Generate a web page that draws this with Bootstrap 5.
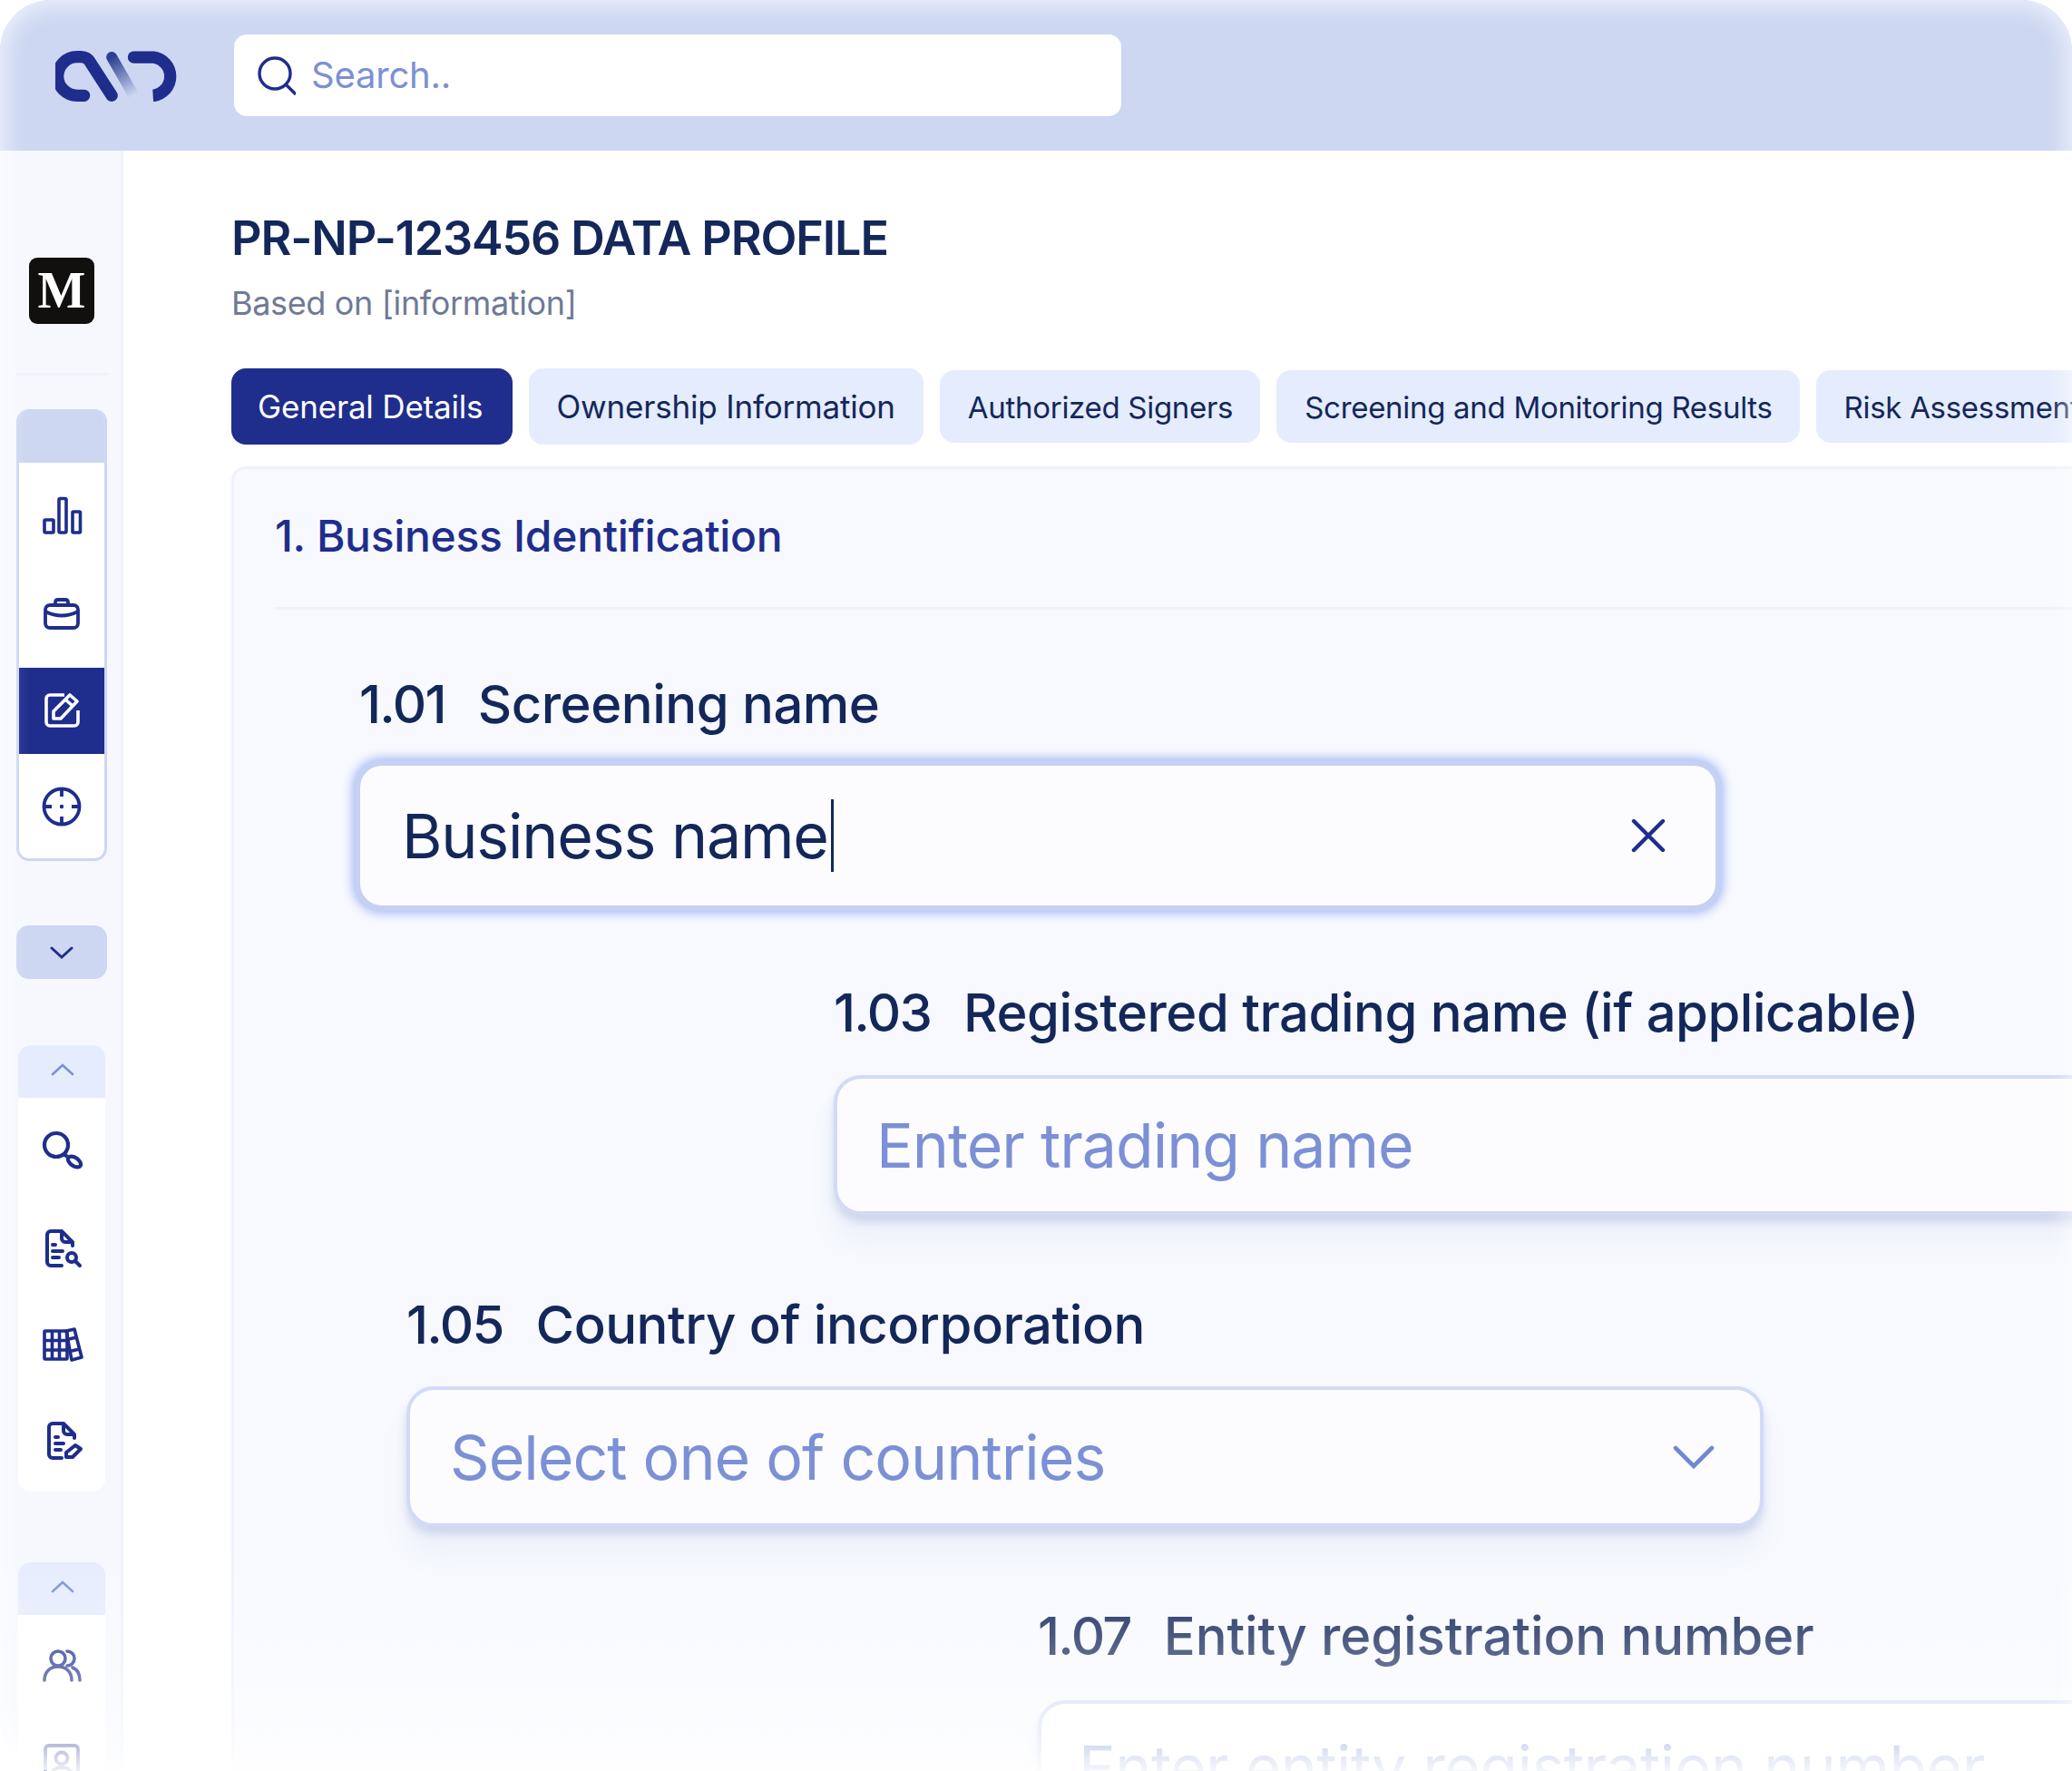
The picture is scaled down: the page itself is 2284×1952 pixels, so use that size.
<!DOCTYPE html>
<html lang="en">
<head>
<meta charset="utf-8">
<title>Data profile</title>
<link href="https://cdn.jsdelivr.net/npm/bootstrap@5.3.0/dist/css/bootstrap.min.css" rel="stylesheet">
<style>
html,body{margin:0;background:#fff}
body{font-family:Inter,"Noto Sans",sans-serif;color:#14275a;width:2284px;height:1952px;overflow:hidden}
.appwin{width:2284px;height:1952px;border-radius:56px;overflow:hidden;position:relative;background:#fff}
.appwin::after{content:"";position:absolute;inset:0;border-radius:56px;pointer-events:none;
 background:linear-gradient(180deg,rgba(255,255,255,0) 1700px,rgba(255,255,255,.22) 1800px,rgba(255,255,255,.55) 1900px,rgba(255,255,255,.85) 1952px);
 box-shadow:inset 0 0 26px 6px rgba(255,255,255,.65)}
.topbar{height:166px;background:#cdd7f2;padding:38px 0 0 61px}
.brand{width:136px;height:56px;margin:18px 61px 0 0}
.searchbox{width:978px;height:90px;background:#fff;border-radius:14px;padding-left:24px;gap:17px}
.searchbox span{font-size:40px;color:#7c90d6;letter-spacing:-.2px}
.workarea{height:1786px}
.sidenav{width:136px;flex:none;background:#f6f8fe;border-right:3px solid #edf1fc;padding:118px 0 0 18px}
.medium{width:72px;height:73px;margin-left:14px;background:#11100e;border-radius:9px;color:#fff;font:700 56px/73px "Liberation Serif",serif;text-align:center}
.sidesep{width:101px;height:3px;background:#edf1fc;margin:54px 0 37px}
.grp{width:100px;border-radius:14px;overflow:hidden;background:#fff}
.grp-main{border:3px solid #cdd7f2;border-top:0;height:498px;padding-bottom:11px}
.grp-head{height:59px;background:#cdd7f2;margin:0 -3px 12px}
.navcell{height:95px;margin-bottom:12px}
.navcell:last-child{margin-bottom:0}
.navcell.on{background:#1f2d8c}
.ico-up{margin-top:-4px}
.ico-dn{margin-top:3px}
.dropbtn{width:100px;height:59px;background:#cdd7f2;border-radius:14px;margin:71px 0 73px}
.grp-soft{width:96px;margin-left:2px;height:492px}
.softhead{height:58px;background:#e5ecfd;margin-bottom:5px;padding:0 0 5px 2px}
.softcell{height:106px}
.grp-gap{margin-top:78px;height:300px}
.mainarea{min-width:0;padding:67px 0 0 119px}
.pagetitle{font-size:52px;line-height:60px;font-weight:600;letter-spacing:-1.1px;color:#14275a;margin:0}
.pagesub{font-size:36px;line-height:44px;letter-spacing:-.35px;color:#6f7a96;margin:19px 0 50px}
.tabrow{gap:18px;height:84px;white-space:nowrap}
.tabrow .nav-link{height:80px;padding:4px 30px 0 31px;border-radius:16px;background:#e5ecfd;color:#14275a;font-size:33px;letter-spacing:-.3px;display:flex;align-items:center}
.tabrow .nav-link.active,.tabrow .nav-link.big{height:84px;padding:0 31px 0 30px;font-size:35px;letter-spacing:-.18px}
.tabrow .nav-link.active{background:#1f2d8c;color:#fff;padding:0 33px 0 29px}
.panelbox{margin-top:24px;width:2100px;height:1500px;background:#f7f9fe;border:3px solid #eef1fb;border-right:0;border-bottom:0;border-radius:16px 0 0 0}
.panelhead{margin-left:45px;padding:44px 0 48px;border-bottom:3px solid #edf1fc}
.panelhead h2{font-size:48px;line-height:60px;font-weight:500;letter-spacing:-.3px;color:#1f2d8c;margin:0}
.fieldlab{font-size:58px;line-height:70px;font-weight:500;letter-spacing:-.5px;white-space:nowrap;color:#14275a}
.fieldlab i{font-style:normal;font-weight:500;letter-spacing:-1.7px;margin-right:36px}
.fieldbox{background:#fcfcfe;border:4px solid #d2dbf5;border-radius:30px;font-size:68px;letter-spacing:-1px;white-space:nowrap;padding:0 44px;color:#7c90d6;box-shadow:0 8px 10px rgba(120,140,200,.26),0 30px 30px rgba(120,140,200,.07)}
.f1{margin:69px 0 0 133px;width:1506px}
.f1 .fieldlab{padding-left:5px;margin-bottom:27px}
.f1 .fieldbox{height:166px;border:6px solid #c5d0f2;padding:0 55px 0 46px;color:#14275a;letter-spacing:-1.2px;box-shadow:0 0 11px 3px #a9baf5}
.caret-bar{display:inline-block;width:3px;height:80px;background:#14275a;margin-left:3px}
.f2{margin:77px 0 0 661px;width:1620px}
.f2 .fieldlab{margin-bottom:34px}
.f2 .fieldbox{height:154px;padding-left:43px}
.f3{margin:86px 0 0 190px;width:1496px}
.f3 .fieldlab{margin-bottom:33px}
.f3 .fieldbox{height:155px;padding-right:50px}
.f4{margin:85px 0 0 886px;width:1300px}
.f4 .fieldlab{margin-bottom:36px;letter-spacing:-.1px}
.f4 .fieldbox{height:153px;background:#fff;padding:0 44px 6px 41px;letter-spacing:-.55px}
</style>
</head>
<body>
<div class="appwin">
  <header class="topbar d-flex align-items-start">
    <svg class="brand" viewBox="118 107 409 168" aria-label="logo">
      <defs><linearGradient id="lg1" x1="305" y1="128" x2="378" y2="255" gradientUnits="userSpaceOnUse"><stop offset="0" stop-color="#2d3f92"/><stop offset="1" stop-color="#cdd7f2"/></linearGradient></defs>
      <path d="M213 255H190A64 64 0 0 1 190 127H203Q224 127 235 147L305 255" fill="none" stroke="#1f2d8c" stroke-width="40" stroke-linecap="round" stroke-linejoin="round"/>
      <path d="M378 128H443A64 64 0 0 1 443 255H447" fill="none" stroke="#1f2d8c" stroke-width="40" stroke-linecap="round"/>
      <path d="M305 128L378 255" fill="none" stroke="url(#lg1)" stroke-width="36" stroke-linecap="round"/>
    </svg>
    <div class="searchbox d-flex align-items-center">
      <svg width="44" height="46" viewBox="0 0 44 46" fill="none" stroke="#1f2d8c" stroke-width="3.4"><circle cx="21" cy="21" r="17"/><path d="M33 33L44 44"/></svg>
      <span>Search..</span>
    </div>
  </header>
  <div class="workarea d-flex">
    <aside class="sidenav">
      <div class="medium">M</div>
      <div class="sidesep"></div>
      <div class="grp grp-main">
        <div class="grp-head"></div>
        <div class="navcell d-flex align-items-center justify-content-center"><svg class="ico-up" width="48" height="48" viewBox="0 0 48 48" fill="none" stroke="#1f2d8c" stroke-width="3.6"><rect x="5" y="29" width="10" height="14" rx="1"/><rect x="21" y="5.5" width="8" height="37.5" rx="1.5"/><rect x="36" y="20" width="8.5" height="23" rx="1"/></svg></div>
        <div class="navcell d-flex align-items-center justify-content-center"><svg width="48" height="48" viewBox="0 0 48 48" fill="none" stroke="#1f2d8c" stroke-width="3.8"><rect x="6" y="14" width="36" height="25" rx="5"/><path d="M17 14v-3q0-3 3-3h8q3 0 3 3v3M6 21q18 9 36 0"/></svg></div>
        <div class="navcell on d-flex align-items-center justify-content-center"><svg class="ico-up" width="48" height="48" viewBox="0 0 48 48" fill="none" stroke="#fff" stroke-width="3.6" stroke-linejoin="round"><path d="M27 8H11a4 4 0 0 0-4 4v26a4 4 0 0 0 4 4h27a4 4 0 0 0 4-4V25"/><path d="M15 34v-8L33 8l8 7-18 19zM28 13l8 7"/></svg></div>
        <div class="navcell d-flex align-items-center justify-content-center"><svg class="ico-up" width="48" height="48" viewBox="0 0 48 48" fill="none" stroke="#1f2d8c" stroke-width="3.8"><circle cx="24" cy="24" r="19.5"/><path d="M24 4v9M24 35v9M4 24h9M35 24h9"/><circle cx="24" cy="24" r="2.2" fill="#1f2d8c" stroke="none"/></svg></div>
      </div>
      <div class="dropbtn d-flex align-items-center justify-content-center"><svg width="26" height="16" viewBox="0 0 26 16" fill="none" stroke="#1f2d8c" stroke-width="3" stroke-linecap="round"><path d="M2 3l11 10L24 3"/></svg></div>
      <div class="grp grp-soft">
        <div class="softhead d-flex align-items-center justify-content-center"><svg width="26" height="16" viewBox="0 0 26 16" fill="none" stroke="#7c90d6" stroke-width="2.6" stroke-linecap="round"><path d="M2 13L13 3l11 10"/></svg></div>
        <div class="softcell d-flex align-items-center justify-content-center"><svg width="48" height="48" viewBox="0 0 48 48" fill="none" stroke="#1f2d8c" stroke-width="4.2"><circle cx="18" cy="18" r="13"/><path d="M27 28l3 3"/><ellipse cx="38" cy="36.5" rx="8" ry="4.6" transform="rotate(35 38 36.5)"/></svg></div>
        <div class="softcell d-flex align-items-center justify-content-center"><svg class="ico-dn" width="48" height="48" viewBox="0 0 48 48" fill="none" stroke="#1f2d8c" stroke-width="4" stroke-linecap="round"><path d="M24 5H12a4 4 0 0 0-4 4v30a4 4 0 0 0 4 4h12M24 5l12 12v4M24 5v8a4 4 0 0 0 4 4h8M14 20h3M14 27h11M14 34h7"/><circle cx="35" cy="34" r="5"/><path d="M39 38l5 5"/></svg></div>
        <div class="softcell d-flex align-items-center justify-content-center"><svg class="ico-dn" width="48" height="48" viewBox="1 0 48 48" fill="none" stroke="#1f2d8c" stroke-width="3.6" stroke-linejoin="round"><rect x="6" y="9" width="25" height="31" rx="1"/><path d="M14.5 9v31M22.5 9v31M6 19.5h25M6 30h25"/><path d="M30 9l9-2 8 31-11 3zM33 18l8-2M36 31l8-2"/></svg></div>
        <div class="softcell d-flex align-items-center justify-content-center"><svg class="ico-dn" width="48" height="48" viewBox="0 0 48 48" fill="none" stroke="#1f2d8c" stroke-width="4" stroke-linecap="round" stroke-linejoin="round"><path d="M26 5H14a4 4 0 0 0-4 4v30a4 4 0 0 0 4 4h10M26 5l12 12v4M26 5v8a4 4 0 0 0 4 4h8M17 20h3M17 27h9M17 34h6"/><path d="M29 42v-5l10-8 6 4-9 9z"/></svg></div>
      </div>
      <div class="grp grp-soft grp-gap">
        <div class="softhead d-flex align-items-center justify-content-center"><svg width="26" height="16" viewBox="0 0 26 16" fill="none" stroke="#7c90d6" stroke-width="2.6" stroke-linecap="round"><path d="M2 13L13 3l11 10"/></svg></div>
        <div class="softcell d-flex align-items-center justify-content-center"><svg width="48" height="48" viewBox="0 0 48 48" fill="none" stroke="#1f2d8c" stroke-width="3.6" stroke-linecap="round"><circle cx="20" cy="14" r="8"/><path d="M5 38c0-10 7-15 15-15s15 5 15 15M30 6a8 8 0 0 1 0 16M36 24c5 2 8 7 8 14"/></svg></div>
        <div class="softcell d-flex align-items-center justify-content-center"><svg width="48" height="48" viewBox="0 0 48 48" fill="none" stroke="#1f2d8c" stroke-width="3.8"><rect x="6" y="4" width="36" height="40" rx="4"/><circle cx="24" cy="18" r="6.5"/><path d="M12 40c0-8 5-12 12-12s12 4 12 12"/></svg></div>
      </div>
    </aside>
    <main class="mainarea flex-grow-1">
      <h1 class="pagetitle">PR-NP-123456 DATA PROFILE</h1>
      <p class="pagesub">Based on [information]</p>
      <nav class="nav tabrow align-items-center flex-nowrap">
        <a class="nav-link active" href="#">General Details</a>
        <a class="nav-link big" href="#">Ownership Information</a>
        <a class="nav-link" href="#">Authorized Signers</a>
        <a class="nav-link" href="#">Screening and Monitoring Results</a>
        <a class="nav-link" href="#">Risk Assessment</a>
      </nav>
      <section class="panelbox">
        <div class="panelhead"><h2>1. Business Identification</h2></div>
        <div class="f1">
          <div class="fieldlab"><i>1.01</i>Screening name</div>
          <div class="fieldbox d-flex align-items-center justify-content-between">
            <span class="d-flex align-items-center">Business name<span class="caret-bar"></span></span>
            <svg width="38" height="38" viewBox="0 0 38 38" fill="none" stroke="#1f2d8c" stroke-width="4.4" stroke-linecap="round"><path d="M3 3l32 32M35 3L3 35"/></svg>
          </div>
        </div>
        <div class="f2">
          <div class="fieldlab"><i>1.03</i>Registered trading name (if applicable)</div>
          <div class="fieldbox d-flex align-items-center">Enter trading name</div>
        </div>
        <div class="f3">
          <div class="fieldlab"><i>1.05</i>Country of incorporation</div>
          <div class="fieldbox d-flex align-items-center justify-content-between">
            <span>Select one of countries</span>
            <svg width="46" height="26" viewBox="0 0 46 26" fill="none" stroke="#7088d0" stroke-width="4.6" stroke-linecap="round"><path d="M3 3l20 20L43 3"/></svg>
          </div>
        </div>
        <div class="f4">
          <div class="fieldlab"><i>1.07</i>Entity registration number</div>
          <div class="fieldbox d-flex align-items-center">Enter entity registration number</div>
        </div>
      </section>
    </main>
  </div>
</div>
<script src="https://cdn.jsdelivr.net/npm/bootstrap@5.3.0/dist/js/bootstrap.bundle.min.js"></script>
</body>
</html>
